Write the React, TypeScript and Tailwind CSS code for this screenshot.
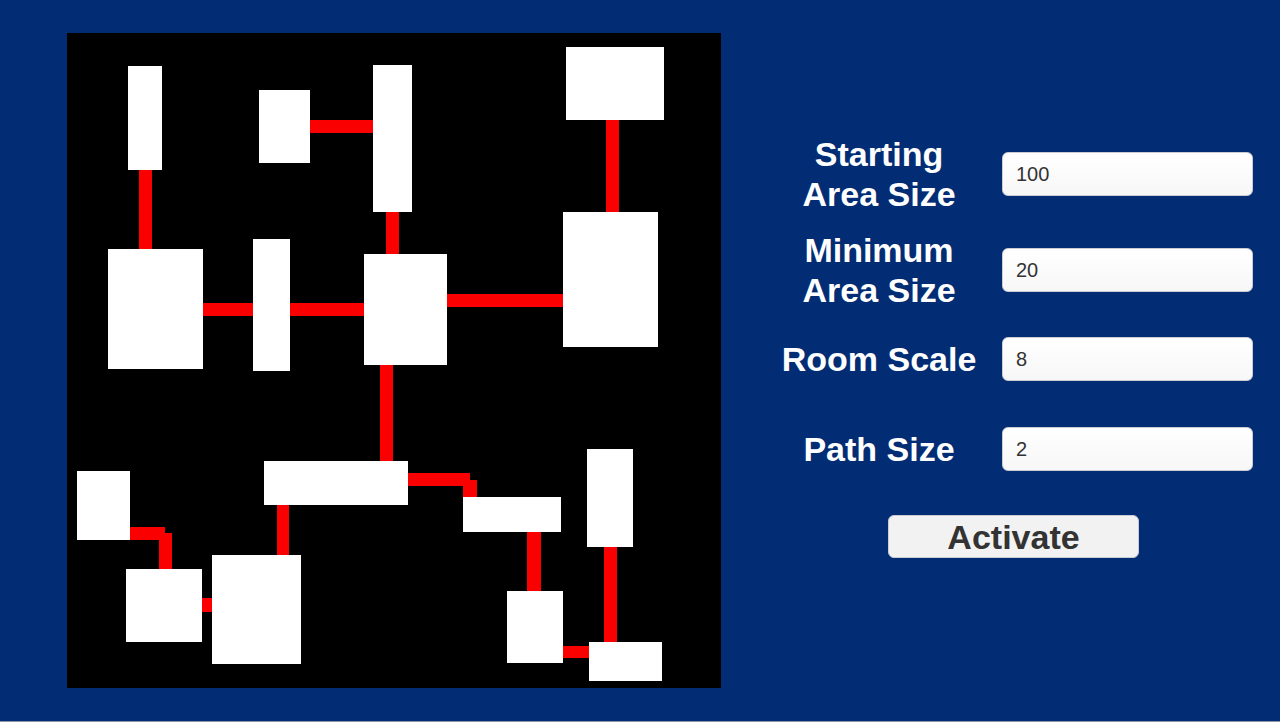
import { useState } from "react";

type Rect = { x: number; y: number; w: number; h: number };

// Rooms of the generated dungeon, in canvas pixels
const rooms: Rect[] = [
  { x: 61, y: 33, w: 34, h: 104 },
  { x: 192, y: 57, w: 51, h: 73 },
  { x: 306, y: 32, w: 39, h: 147 },
  { x: 41, y: 216, w: 95, h: 120 },
  { x: 186, y: 206, w: 37, h: 132 },
  { x: 297, y: 221, w: 83, h: 111 },
  { x: 499, y: 14, w: 98, h: 73 },
  { x: 496, y: 179, w: 95, h: 135 },
  { x: 197, y: 428, w: 144, h: 44 },
  { x: 396, y: 464, w: 98, h: 35 },
  { x: 520, y: 416, w: 46, h: 98 },
  { x: 440, y: 558, w: 56, h: 72 },
  { x: 522, y: 609, w: 73, h: 39 },
  { x: 10, y: 438, w: 53, h: 69 },
  { x: 59, y: 536, w: 76, h: 73 },
  { x: 145, y: 522, w: 89, h: 109 },
];

// Corridor segments joining the rooms
const paths: Rect[] = [
  { x: 243, y: 87, w: 63, h: 13 },
  { x: 72, y: 137, w: 13, h: 79 },
  { x: 136, y: 270, w: 50, h: 13 },
  { x: 223, y: 270, w: 74, h: 13 },
  { x: 319, y: 179, w: 13, h: 42 },
  { x: 539, y: 87, w: 13, h: 92 },
  { x: 380, y: 261, w: 116, h: 13 },
  { x: 313, y: 332, w: 13, h: 96 },
  { x: 341, y: 440, w: 62, h: 13 },
  { x: 396, y: 447, w: 14, h: 17 },
  { x: 460, y: 499, w: 14, h: 59 },
  { x: 537, y: 514, w: 13, h: 95 },
  { x: 496, y: 613, w: 26, h: 12 },
  { x: 63, y: 494, w: 35, h: 13 },
  { x: 92, y: 500, w: 13, h: 36 },
  { x: 135, y: 565, w: 10, h: 14 },
  { x: 210, y: 472, w: 12, h: 50 },
];

function Field({
  label,
  value,
  onChange,
  className,
  tall,
}: {
  label: string[];
  value: string;
  onChange: (v: string) => void;
  className?: string;
  tall?: boolean;
}) {
  return (
    <div className={`flex items-center ${tall ? "h-[80px]" : "h-[44px]"} ${className ?? ""}`}>
      <div className="w-[218px] text-center text-white font-bold text-[34px] leading-[40px]">
        {label.map((line) => (
          <div key={line} className="whitespace-nowrap">
            {line}
          </div>
        ))}
      </div>
      <input
        type="text"
        value={value}
        onChange={(e) => onChange(e.target.value)}
        className="ml-[14px] w-[251px] h-[44px] px-[13px] rounded-[6px] border border-[#c9ccd3] bg-gradient-to-b from-white to-[#f7f7f7] text-[20px] text-[#333333] outline-none"
      />
    </div>
  );
}

export default function App() {
  const [startSize, setStartSize] = useState("100");
  const [minSize, setMinSize] = useState("20");
  const [roomScale, setRoomScale] = useState("8");
  const [pathSize, setPathSize] = useState("2");

  return (
    <div
      className="w-[1280px] h-[722px] bg-[#022d74] border-b border-[#8f95a8] flex items-start overflow-hidden"
      style={{ fontFamily: '"Liberation Sans", Arial, sans-serif' }}
    >
      <div className="relative ml-[67px] mt-[33px] w-[654px] h-[655px] bg-black shrink-0">
        {paths.map((p, i) => (
          <div
            key={`p${i}`}
            className="absolute bg-[#fa0000]"
            style={{ left: p.x, top: p.y, width: p.w, height: p.h }}
          />
        ))}
        {rooms.map((r, i) => (
          <div
            key={`r${i}`}
            className="absolute bg-white"
            style={{ left: r.x, top: r.y, width: r.w, height: r.h }}
          />
        ))}
      </div>

      <div className="ml-[49px] pt-[134px] w-[483px] flex flex-col">
        <Field tall label={["Starting", "Area Size"]} value={startSize} onChange={setStartSize} />
        <Field tall label={["Minimum", "Area Size"]} value={minSize} onChange={setMinSize} className="mt-[16px]" />
        <Field label={["Room Scale"]} value={roomScale} onChange={setRoomScale} className="mt-[27px]" />
        <Field label={["Path Size"]} value={pathSize} onChange={setPathSize} className="mt-[46px]" />
        <button
          type="button"
          className="mt-[44px] ml-[118px] w-[251px] h-[43px] rounded-[6px] border border-[#c9ccd3] bg-[#f2f2f2] text-[#333333] font-bold text-[34px] leading-[34px] flex items-center justify-center"
        >
          Activate
        </button>
      </div>
    </div>
  );
}
